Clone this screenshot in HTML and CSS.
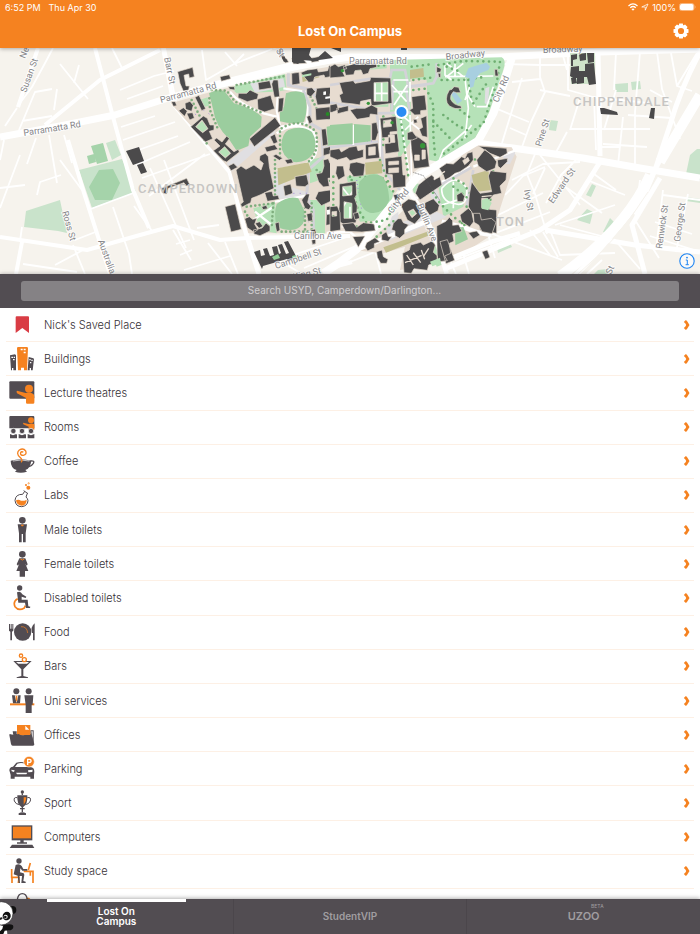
FILE: index.html
```html
<!DOCTYPE html>
<html lang="en">

<head>
    <meta charset="UTF-8">
    <meta name="viewport" content="width=device-width, initial-scale=1.0">
    <title>Lost On Campus</title>
    <link rel="stylesheet" href="styles.css">
</head>

<body>
    <svg class="defs" aria-hidden="true">
        <symbol id="chevron" viewBox="0 0 18 30">
            <path d="M1 6 6 1Q9 0 11 4L18 15 11 26Q9 30 6 29L1 24Q7 20 8 15 7 10 1 6z" fill="#f58220"/>
        </symbol>
    </svg>

    <header class="header">
        <div class="status">
            <span>6:52 PM</span>
            <span>Thu Apr 30</span>
            <span class="status-right">
                <svg width="10" height="8" viewBox="0 0 20 16" fill="none" stroke="#fff" stroke-width="2.6"><path d="M1 6Q10-2.500 19 6M4.500 9.500Q10 4.500 15.500 9.500"/><path d="M10 15.500 6.800 12.200Q10 9.600 13.200 12.200z" fill="#fff" stroke="none"/></svg>
                <svg width="8" height="8" viewBox="0 0 16 16" fill="none" stroke="#fff" stroke-width="1.500"><path d="M1.500 8 14 2 8.500 14.500V8z"/></svg>
                <span>100%</span>
                <svg width="17" height="8" viewBox="0 0 34 16"><rect x="1" y="1" width="29" height="14" rx="4" fill="none" stroke="#fbc79b" stroke-width="1.500"/><rect x="2" y="2" width="27" height="12" rx="3" fill="#fff"/><path d="M32 5v6q2-3 0-6" fill="#fbc79b"/></svg>
            </span>
        </div>
        <div class="title-bar">
            <h1>Lost On Campus</h1>
            <button class="settings" aria-label="Settings">
                <svg width="16" height="16" viewBox="-8 -8 16 16"><g fill="#fff"><path d="M-1.800-7.500h3.600l.7 3h-5zM-1.800 7.500h3.600l.7-3h-5z"/><path d="M-1.800-7.500h3.600l.7 3h-5zM-1.800 7.500h3.600l.7-3h-5z" transform="rotate(45)"/><path d="M-1.800-7.500h3.600l.7 3h-5zM-1.800 7.500h3.600l.7-3h-5z" transform="rotate(90)"/><path d="M-1.800-7.500h3.600l.7 3h-5zM-1.800 7.500h3.600l.7-3h-5z" transform="rotate(135)"/></g><circle r="4.500" fill="none" stroke="#fff" stroke-width="2.800"/></svg>
            </button>
        </div>
    </header>

    <div class="map">
        <svg class="map-canvas" viewBox="0 48 700 226" preserveAspectRatio="xMidYMid slice" role="img" aria-label="Campus map">
            <rect y="48" width="700" height="226" fill="#f6f3ed"/>

            <!-- parks outside of campus -->
            <g fill="#c9e3cb">
                <path d="M79 170 122 159 136 192 92 208zM26 211 60 200 67 233 58 231 24 227zM106 143 115 140 121 155 112 160z"/>
                <path fill="#a5d3aa" d="M91 146 103 143 108 161 97 164zM87 156l7-2 2 8-7 2zM99 170l14-1 7 14-8 17-17 0-6-13z"/>
                <path d="M615 84l13-1v9l-12 0zM631 82l9-1 1 8-9 1zM550 120l8 1-2 10-7-1zM586 195l6-11 4 2-5 11zM577 220l10-11 6 3-3 12zM603 232l7-14 4 4-5 13zM690 155l7-6h3v31l-14-6zM686 197l14 2v4l-14-2zM497 248l13-5 2 4-14 6zM598 270l10-1v5h-14z"/>
            </g>

            <!-- side streets -->
            <g fill="none" stroke="#fff" stroke-width="1.800" stroke-linejoin="round">
                <path d="M60 64 88 99M53 48 44 65 32 87 17 107M74 83l5-18M112 48l10 20M165 48l11 54M120 90l34-14 20-5M127 99l36-13M202 50l4 30 28-16 10-10M225 52l12 14M234 64l38-15M19 130 35 92 52 89M22 121l30-5M57 89l-3 21M64 135l8 28M49 135l8 48M36 138l-9 26M0 188l25-3M37 195l3-13 21-7M4 140 0 160M17 108 5 126"/>
                <path d="M136 165l54-23M142 178l68-24M149 196 205 154M121 127l34-11M123 140l52-18M130 153l48-17M150 168l36 80M164 160l30 80M113 207l16 47 3 20M73 245l12 29M88 210 136 192M75 240 98 231M0 208l20-53M60 160l22 30M22 227l-2 14M173 230l18 30M176 244l14-4M180 255l12-5M208 243l24 31M184 270l46-14M197 228l22-3M225 242l13 32M23 264l54 8M55 265 83 250M152 231l-18-25M262 250l40 24M290 256l60-20M304 268l80-34"/>
                <path d="M503 64l37 1 40 0M512 82l28-3M540 57l0 20 5 15-14 30-9 25M522 78l-20 65M568 52l0 38 25 7 55 6M580 98l-10 32M540 90l30 6M570 129l34 0 46 0M562 52l5 18M616 52l-2 38M604 130l12-40M640 52l-5 60 0 53M623 117l-5 48M671 53l6 33 15 5M657 52l5 37 18 50M697 53l-20 33M650 90l22 12M600 147l20 0M594 98l2 52M567 132l-13 24M603 144l44 3M495 108l34 14M510 128l16 7M628 115l44 3"/>
                <path d="M512 180 543 164 580 162M505 195 523 176 545 167M535 154l-8 20 8 20 12 40M540 155l40 50M545 168l-12 26M576 160l-15 15-15 28M594 174l22 16M567 188l35 25M587 180l38 15M555 225l60-20M560 225l45 12M550 230l10 25 55-2M543 193l-45 22M550 212l-57 22M485 224l10 34M530 230l20 25M543 232l15 25M602 260l-15 14M640 180l-5 40 24 38M663 190l-7 60M688 194l-12 58M663 195l37 5M655 222l37 12M650 236l50 16M614 239l26 30M446 251l10 23M462 250l7 24M482 230l80 30M450 262l60-23M375 250l6 24M350 262l40-16"/>
            </g>

            <!-- main roads -->
            <g fill="none" stroke="#fff" stroke-width="4" stroke-linejoin="round">
                <path d="M45 125 100 80 160 50M95 48 113 117 133 190 149 228M38 48 18 107M68 140 84 193 110 274M0 237 87 250 140 235 173 226 220 240 247 238 350 236M22 242 16 274M163 48l10 54M330 268 352 262"/>
                <path stroke-width="5" d="M172 102 230 172 247 236 259 274M598 52l2 104M700 52Q680 90 670 125L655 170 636 215"/>
                <path stroke-width="5" d="M447 268 540 230 570 210 600 162M545 230 635 245 700 252"/>
                <path stroke-width="7" d="M0 137 60 126 115 115 165 99 215 85 290 66 350 57 480 58 600 52 700 49"/>
                <path stroke-width="7" d="M477 143 583 158 640 168 700 178"/>
                <path stroke-width="10" d="M700 95 660 162M650 175Q625 230 560 276"/>
                <path stroke-width="5" d="M664 150Q640 210 575 276M660 178 632 225 645 274"/>
            </g>
            <g fill="none" stroke="#f6f3ed"><path d="M700 118 670 166M648 192Q618 240 578 274"/></g>

            <!-- campus, west side -->
            <g transform="translate(160 60) scale(.33333)">
                <path fill="#e7dcd0" d="M32 130 165 92 380 42 542 14v506H265L242 440 212 330z"/>
                <path fill="#b6e2b8" d="M210 82 375 42 380 90 350 95 230 100zM450 300 490 290 495 355 450 370zM280 445 345 425 350 520 300 510zM445 420h50v100h-30zM118 120l25-8 5 25-20 5z"/>
                <g fill="#e0dfe2"><path d="M200 310 325 210 350 205 340 225 215 335zM340 340 370 330 375 375 450 400 440 412 345 418zM270 70l100-15 5 25-90 18z"/></g>
                <g fill="none" stroke="#fff" stroke-width="7"><path d="M210 95Q240 135 310 160L350 170M355 90 350 150 360 200 440 190 445 130 435 95 370 85M350 220Q400 180 460 215Q490 290 430 315L350 330M345 425l105-20M285 455l50 40M280 480l60-40"/></g>
                <g fill="none" stroke="#d3d2d8" stroke-width="9"><path d="M385 40v35l75 15 80 0M430 90l20 50v50l35 20 5 80-45 40-5 80 20 40v105M490 265l50-10M460 100l20 30 60 0"/></g>
                <path fill="none" stroke="#fff" stroke-width="18" d="M160 80 395 24 540-4"/>
                <g fill="#9bcd9e">
                    <path d="M147 100Q175 85 195 95L222 130Q280 145 305 170L303 200 270 230 265 258 230 272 205 235Q165 195 160 150z"/>
                    <path d="M378 100Q410 88 432 100Q448 140 432 185Q400 195 360 184V152L372 140z"/>
                    <path d="M385 210Q425 195 455 215Q475 245 460 280Q440 310 400 306Q365 290 364 255Q366 220 385 210z"/>
                    <path d="M350 432Q385 405 415 415L432 450Q438 490 420 500Q395 520 350 500Q340 460 350 432z"/>
                    <path d="M500 200l40-8v60l-38 5z"/>
                </g>
                <path fill="#c2be8d" d="M352 325 445 307 455 335 355 376zM425 42l50-10 3 20-50 14z"/>
                <g fill="none" stroke="#7fae7e" stroke-width="8" stroke-linecap="round" stroke-dasharray="0 13">
                    <path d="M155 90 200 92 225 125 310 160M148 115 150 150 175 210M365 205Q420 170 468 215Q480 280 440 310M360 215v80M345 300v110M95 120l30 60M140 250l-20-30M255 455l30 50M365 515h80M435 430v80M340 430 335 500M230 75 375 48M452 110l30 60 40 10M470 330l50 40v120M455 430v80M260 440l80-10"/>
                </g>
                <g fill="none" stroke="#a087d8" stroke-width="3" stroke-dasharray="3 16"><path d="M90 150l50 40M130 150l30 20M400 400h50M500 350l20 70M430 470l20 20"/></g>
                <g class="building outlined">
                    <path d="M53 35 98 22 103 50 88 54 86 42 72 46 78 78 88 78 86 90 70 93 60 70zM180 50 208 44 212 56 184 64zM370 0l10-4 6 10-10 3zM395-5 425-8 440 10 400 12zM450-5l25-5 2 14-22 3z"/>
                    <path d="M34 125l12 0 4 12-10 2zM56 152l14-9 12 10-8 16zM75 130l15-6 10 12-5 18-18-6zM80 160l18-2 5 16-14 6zM105 112l12-6 20 40-12 6zM205 80l18 0 2 10-16-2z"/>
                    <path fill-rule="evenodd" d="M92 200 130 168 142 175 150 195 162 195 162 210 148 214 158 236 136 246zM107 200 128 218 144 206 126 180z"/>
                    <path fill-rule="evenodd" d="M160 272 180 258 162 240 170 234 186 246 200 228 208 236 196 252 222 275 235 268 238 276 200 306 190 302zM176 276 196 294 212 280 194 260z"/>
                    <path d="M268 237 345 172 362 197 283 260zM228 330 243 318 258 328 282 315 303 330 310 310 298 300 300 287 316 280 325 290 328 320 342 385 300 405 275 415 272 428 245 442 242 432 250 426zM195 440 226 432 244 508 213 516zM5 385 80 355 90 375 78 378 72 368 25 385 20 402 10 400zM205 318l16-8 12 12-20 10z"/>
                    <path d="M235 100l25 0 10-10 25 12-3 15-30 8-28-12zM294 68l35-6 6 22-38 6zM340 60l14 0 5 50-16 2-8-40zM292 118l40-12 12 40-30 10-20-8zM356 115l16-2-4 40-14 4zM330 230l15-8 8 25-12 5zM314 262l30-8 10 14-34 8zM338 288l10-5 20 12-10 6zM374 300l20-4 6 12-18 4zM405 350 440 344 446 372 435 380 408 378zM370 378 392 372 398 400 375 408zM314 398l22-4 4 14 14-2 4 12-36 6zM305 440l14-4 4 10-14 3z"/>
                    <path d="M395 40l22-3 3 34-24 4zM422 38l20-8 30-4 3 10 28-4 4-15 33-4v32l-45 8-3-8-28 6-4 14-14 2zM440 85l16-2 10 12-14 16-12-8zM470 85l50-4v20h-10v10h10v20l-48 4-6-25zM466 145l58-6v38l-56 4zM440 170l10-4 8 20-10 6zM484 208l14-2 6 48-16 4zM490 265l50-12v20l-50 14z"/>
                    <path d="M490 300l15-4 5 14 18-2-6 25 2 20-20 2 4 24-18 2-14-15-8-24 18-4 6-20zM475 395l35-5 10 15-6 18-30 14-18-22zM425 420l14-18 10 0-6 25 10 12-6 10-12-4zM500 440l38-6v56l-40 6zM452 510l14-3 4 20-14 4zM455 540l12-3 0 14-10 2zM440 462l16-4 2 24-14 2zM254 476l14-6 10 8 12-3-6 18 10 16-12 8-20-14zM280 510l26-6 12-15 12 10 0 14-30 14-18-5zM345 490l12-4 3 25-10 5zM285 490l14-5 10 14-12 6z"/>
                </g>
                <g fill="#b6e2b8"><path d="M426 45l28-5v6l-28 6zM178 276 194 262 210 280 196 292zM109 201 126 183 142 205 128 216z"/></g>
                <path fill="#fff" d="M490 95l8-1 0 10-8 1zM496 110l14-1v6l-14 2zM500 450l20-3v14l-19 3z"/>
                <circle cx="503" cy="162" r="6" fill="#268a26"/>
            </g>

            <!-- campus, east side and Victoria park -->
            <g transform="translate(330 60) scale(.33333)">
                <path fill="#e7dcd0" d="M0 14 180 0 290 20 300 300 240 345 100 520H0zM430 255 545 262 560 290 485 525 385 590 350 605 210 630 225 560 160 580 90 572z"/>
                <path fill="#b6e2b8" d="M180 0 515-8Q530 0 520 30L470 180 430 242 325 305 298 300 290 60 180 50zM10 20l160-15v20L10 38zM180 30h60l5 210-40 60-5-120-20-20zM50 350l90-10 50 60-20 80-80 5-25-60zM325 380 370 360 410 380 400 440 340 470zM130 60h45v80h-45zM30 370h45v110H30zM245 380l20-10 5 25-18 5zM300 560l60-10 0 55-40 15z"/>
                <path fill="#e0dfe2" d="M170 500 320 455 350 470 170 545zM300 400l20-15 15 50-20 10zM410 400l30-10v40l-25 10zM520 285l35-15 0 12-15 30-20 0zM185 470l20-15 0 30-30 20zM466 85l12-5-4 55-10-5z"/>
                <g fill="none" stroke="#fff" stroke-linejoin="round">
                    <path stroke-width="24" d="M545-5 520 75 490 160 445 242 335 308 262 350 235 385 190 430 135 500 80 568 25 610-20 640"/>
                    <path stroke-width="14" d="M238 395 275 450 300 500 325 560 350 640M335 485 400 502 445 518 485 525M90 565 300 480M350 600 485 545 570 520"/>
                    <path stroke-width="7" d="M420 320 300 385 260 415M430 320 560 270M105 560l-45-45-70 4"/>
                </g>
                <g fill="none" stroke="#d3d2d8" stroke-width="8"><path d="M0 75 130 55 180 55 185 30H225L235 80 310 70 320 50V10M0 128 100 145 140 160 240 158M140 160 155 260 160 330 210 390M0 262 145 245M228 80l10 70M190 60l-5 90M240 80l50-5M430 330l-20 110M270 410 425 322"/></g>
                <path fill="none" stroke="#fff" stroke-width="5" d="M345 50 490 48M350 10l50 40M350 50 400 10M375 5v45M405 55l10 90-10 90M410 100l25 40M440 140l30 0 20-60M405 120l25-70M410 210l-70 60-12 30M410 215l15-20M345 15v30l20 15M185 75l45 50M232 75l-40 60M190 60h45M190 95h45M240 65v60M210 160l30 200M240 165l5 190M220 170l50 40M265 170l-40 40M70 195v60M135 70v60M155 65v65M130 100h45M150 180v110M335 385q45-50 75 0q5 60-40 45q-35-5-35-45M335 435l80-25M370 365v80M35 380l40 50M80 375l-50 80M35 500h50M60 440v60"/>
                <g fill="none" stroke="#6faf72" stroke-width="8" stroke-linecap="round" stroke-dasharray="0 17">
                    <path d="M325 15 400 3 510 5 500 70 460 190 330 290M335 60l65 0 70-10M295 100l15 35 0 90 5 60M350 20l40 15M415 60l10 60M340 165l40 30 40 20M390 150l40 30M310 185l60 60M430 130l40-60M10 30 170 15M245 20l65-8M250 60l60-8M60 350l20-15M150 300l30 80M65 360l15 80 30 50 60-10 30-60M90 350l70 5 30 40M160 170v100M210 160l25 190M250 90l45-5M140 530l60-55M290 370l40 60 40 40 40 30M340 340l60 30 40 60M410 440l-20 70M370 380l50 40M420 290l70 40-10 100M10 350v150M80 500l70 0"/>
                </g>
                <path fill="none" stroke="#a087d8" stroke-width="3" stroke-dasharray="3 9" d="M75 245l60-3M10 470v50M80 360l15 90M30 375h40"/>
                <g fill="#a8cfe0"><path d="M405 50 415 25 435 18 470 8 480 20 475 30 450 40 435 60 430 80 420 84 418 55zM362 100l12-6 22 28-14 10z"/></g>
                <path fill="#c2be8d" d="M240 30l40-6 2 26-42 6zM105 308l50-6 2 38-50 4zM425 345l50-15 10 60-50 6zM160 562 300 512 302 524 168 578z"/>
                <g fill="#9bcd9e"><path d="M0 195 68 190v62L0 256zM72 192l50 4v48l-50 6zM88 365Q120 330 158 350Q175 370 178 420Q160 465 120 458Q90 450 85 400zM375 508l25-8 14 38-38 18z"/></g>
                <g class="building outlined">
                    <path d="M0 20l15-8 10 8 20-6 5 12-15 4 10 20-45 4zM40 20l45-12 25 2 30 0v12l-20 4-5 14-16 4-6-14-18 2-4 12-24 2z"/>
                    <path fill-rule="evenodd" d="M28 68 70 62 75 70 120 62 122 52 182 54 186 130 124 138 122 118 92 124 90 135 72 132 35 128 28 105 38 100zM132 68v56h42V66z"/>
                    <path d="M0 135l20-4 6 18-20 8-6 0zM20 145l35-8 0 16-32 8zM60 150l20-5 25 0 20-10 18 10v20l-22-3-2 10-38 6zM125 190l15-3 5 30-8 24-12 0zM245 110 285 105 290 150 272 152 272 164 254 165 238 150 248 145z"/>
                    <path fill-rule="evenodd" d="M150 175l48-6 4 45-22 2 0 8 22-3 6 54-42 6-2-30 18-2-2-18-24 3zM160 182v20l25-3-2-20zM175 225v24l20-2-2-22z"/>
                    <path fill-rule="evenodd" d="M165 295l50-6 4 56 8 0 0 35-38 4-2-40-20-2zM176 305v10l30-2v-10zM176 325v14l30-2v-14z"/>
                    <path fill-rule="evenodd" d="M240 215l30 20 20 15 8 70-46 6-8-60zM254 285v16h14v-16zM276 270v28l10-2v-26z"/>
                    <path d="M272 175l18-8 2 65-16-4-8-20 10-6zM232 218l15-4 15 20-15 6-15 0zM250 178l10 0 2 10-10 2z"/>
                    <path fill-rule="evenodd" d="M106 255l38-6 5 45-42 4zM116 262v24l20-2v-24z"/>
                    <path d="M0 270 28 266 34 276 58 262 80 258 84 272 100 268 100 292 60 302 50 292 22 300 0 290zM60 310l20-4 25 6-4 35-30 3-14-20zM20 318l20 0 5 30-20 12-8-20z"/>
                    <path fill-rule="evenodd" d="M28 372l50-8 2 40-6 10 8 24-4 50-38 4-16-10 4-50zM38 380v28l28-3v-28zM42 425l0 50h24v-45z"/>
                    <path fill-rule="evenodd" d="M0 440l22-2 8 20 2 52-32 5zM6 455v14l14-1v-14z"/>
                    <path d="M70 460l15-3 4 18-14 4zM35 492l35-4 10 14 20-14 32 4 4 20-40 4-50-2zM68 530 105 528 85 562zM190 405l18-4 2 18-14 3z"/>
                    <path d="M358 90Q340 120 358 138Q375 150 395 145L393 138Q370 135 362 118Q360 105 370 95L380 98 392 98 386 82 372 80 366 88zM320 20l14 6-2 10-12 2zM324 40h8v12l-6 0zM494 28l8 0 3 20-10 0z"/>
                    <path d="M445 258 530 265 532 280 510 292 480 280zM440 300 465 268 485 285 500 305 495 325 470 335 445 318zM502 300l30-5 0 10-20 20-8-6z"/>
                    <path fill-rule="evenodd" d="M328 325 350 310 370 312 395 290 405 295 412 280 428 275 430 300 415 318 390 335 375 340 360 352 345 360 340 345zM398 302l6 12 14-12-4-10z"/>
                    <path d="M265 375 290 355 305 345 312 352 312 360 330 350 336 375 270 420 256 400zM380 405l14-8 10 12-4 16-18 0zM285 428l25-12 18 20-4 16-25 14-16-24z"/>
                    <path fill-rule="evenodd" d="M212 435l24-18 20 5 24 40-26 30-22-12zM234 455l12 18 14-12-10-14z"/>
                    <path d="M190 490l14-14 10 0 6 12 16 6-12 15 0 12-15 14-14-8 0-14-10-4zM155 525l14-10 6 15 10 0-10 14-20-4zM110 548l25-15 14 12-16 6 0 12-20 10-8-12zM140 575l16-5 4 20 14 8-4 12-18 0-10-18z"/>
                    <path fill-rule="evenodd" d="M425 365 450 400 485 395 475 348 482 332 500 335 530 338 528 360 510 378 515 400 490 405 475 422 478 448 500 450 500 520 450 510 448 495 415 440 418 405zM455 415v28l15 0 0-28z"/>
                    <path d="M390 465l25-20 10 10 6 30-12 16-24-16zM415 518l25-5 10 12-20 12zM430 460l20 0 4 20 30-5 14 12-12 34-30-6-10-20-14-8zM320 498l28-14 10-12 10 10 0 14 18-2 10 20-28 8 4 22-14 6 4 30-18 8 8 14-30 4zM330 545l22-6 22 62-26 10zM218 580l20-10 4-15 30-8 8 8 26-12 10 12-6 22 12 10 0 18-26 10-4 16-40-5-8 14-22-2zM456 575l16-5 8 22-14 6z"/>
                </g>
                <g fill="none" stroke="#e7dcd0" stroke-width="4"><path d="M230 585l20 30M250 578l22 30M274 570l10 28M296 565l-16 25M225 608l50-22M335 340l10-6M455 410l30-3"/></g>
                <g fill="#b6e2b8"><path d="M238 456l8 12 10-8-8-10zM455 420l18-6 12 15-10 22-20-5zM300 605l30-12 3 16-26 10z"/></g>
                <g fill="#37953a"><circle cx="278" cy="257" r="8"/><circle cx="186" cy="188" r="5"/><circle cx="37" cy="32" r="5"/><circle cx="115" cy="130" r="5"/></g>
                <path fill="none" stroke="#555" stroke-width="2" stroke-dasharray="3 2" d="M250 337l30 10 50 75"/>
            </g>

            <!-- buildings out in the streets -->
            <g class="building">
                <path d="M126 151 139 147 144 161 133 165zM137 165l6-2 4 9-6 2zM278 51l3-1 6 11-3 1zM292 48l19 0-2 7 5 6-12-1-4 4-6-2zM315 60l10-9 8 7-14 2zM331 48h10l0 4zM401 48h6v2h-6zM600 108l4 0 13 4 1 3-17-1zM651 108l4 0-1 11-5-1z"/>
                <path fill="#cfe3c9" d="M570 53h25v31h-24z"/>
                <path d="M571 55l6-1 0 5-4 1 0 6-2 0zM579 54l7-1 0 7-6 1zM587 53l7 0 0 9-6 1zM571 67l8-1 0 5 6 0 0-7 9-1 2 21-7 1-2-8-3 0 0 6-7 1 0-6-4 0-3-2zM571 78l5 0 1 5-5 1z"/>
                <path d="M254 252l6-2 1 6 4-1-2-6 4-1 3 8 4-1-2-8 5-1 2 8 2-1-3-8 4-1 4 10 3-1-5-11 4-1 9 17-9 3-1-2-24 7-1 3z"/>
            </g>
            <path fill="#90cc95" d="M272 257l6-3 2 4-6 2zM292 256l4-1 1 3-4 1z"/>

            <g class="district">
                <text x="138" y="193">CAMPERDOWN</text>
                <text x="573" y="106">CHIPPENDALE</text>
                <text x="496" y="226">TON</text>
            </g>
            <g class="street">
                <text transform="translate(24 136) rotate(-9)">Parramatta Rd</text>
                <text transform="translate(161 103) rotate(-15)">Parramatta Rd</text>
                <text transform="translate(349 64)">Parramatta Rd</text>
                <text transform="translate(446 60) rotate(-6)">Broadway</text>
                <text transform="translate(543 53) rotate(-2)">Broadway</text>
                <text transform="translate(26 93) rotate(-70)">Susan St</text>
                <text transform="translate(25 59) rotate(-68)">New St</text>
                <text transform="translate(164 58) rotate(78)">Barr St</text>
                <text transform="translate(264 32) rotate(58)">Ross St</text>
                <text transform="translate(498 103) rotate(-66)">City Rd</text>
                <text transform="translate(541 147) rotate(-72)">Pine St</text>
                <text transform="translate(553 204) rotate(-56)">Edward St</text>
                <text transform="translate(524 190) rotate(80)">Ivy St</text>
                <text transform="translate(662 249) rotate(-82)">Renwick St</text>
                <text transform="translate(680 242) rotate(-82)">George St</text>
                <text transform="translate(62 212) rotate(74)">Ross St</text>
                <text transform="translate(98 241) rotate(70)">Australia St</text>
                <text transform="translate(294 239)">Carillon Ave</text>
                <text transform="translate(276 269) rotate(-18)">Campbell St</text>
                <text transform="translate(294 280) rotate(-14)">King St</text>
                <text transform="translate(392 214) rotate(-52)">City Rd</text>
                <text transform="translate(417 205) rotate(68)">Butlin Ave</text>
                <text transform="translate(611 275) rotate(-66)">St</text>
            </g>
            <circle cx="401.500" cy="112" r="6" fill="#2a8cf4" stroke="#fff" stroke-width="2"/>
        </svg>
        <button class="info" aria-label="Map information">
            <svg width="16" height="16" viewBox="0 0 16 16"><circle cx="8" cy="8" r="7.200" fill="#fff" fill-opacity=".6" stroke="#1d84f3" stroke-width="1.100"/><path d="M6.800 7H8.300V11.500M6.600 11.700h3.200" stroke="#1d84f3" fill="none"/><circle cx="8" cy="4.600" r=".9" fill="#1d84f3"/></svg>
        </button>
    </div>

    <form class="search">
        <input type="search" aria-label="Search" placeholder="Search USYD, Camperdown/Darlington...">
    </form>

    <ul class="places">
        <li><a href="#"><svg class="icon" viewBox="0 0 78 78"><path d="M20 16q0-3 3-3h34q3 0 3 3v47L40 48 20 63z" fill="#d93c44"/></svg><span>Nick's Saved Place</span><svg class="chevron"><use href="#chevron"/></svg></a></li>
        <li><a href="#"><svg class="icon" viewBox="0 0 78 78"><path class="dark" d="M3 28 18 25 21 28V73H13V66H9V73H6zM59 33l14 4 2 2-4 34H66V66H62V73H56z"/><path class="orange" d="M24 6Q24 3 28 3H53Q57 3 57 7L54 73H45V65H36V73H27z"/><path fill="#fff" d="M35 8h6v5h-6zM44 8h6v5h-6zM44 17h6v5h-6zM7 32h5v4H7zM14 32h4v4h-4zM12 39h5v4h-5zM61 39h4v4h-4zM67 41h4v4h-4zM63 48h4v4h-4z"/></svg><span>Buildings</span><svg class="chevron"><use href="#chevron"/></svg></a></li>
        <li><a href="#"><svg class="icon" viewBox="0 0 78 78"><rect class="dark" x="1" y="4" width="75" height="52" rx="3"/><path class="orange" d="M24 32 50 39Q65 35 74 43 77 48 76 68Q76 71 72 71H54Q50 71 51 66V54L24 40Q21 34 24 32z"/><circle class="orange" cx="60" cy="26" r="12"/></svg><span>Lecture theatres</span><svg class="chevron"><use href="#chevron"/></svg></a></li>
        <li><a href="#"><svg class="icon" viewBox="0 0 78 78"><path class="dark" d="M4 6H73Q76 6 76 9V43H1V9Q1 6 4 6z"/><path class="orange" d="M42 26 58 30Q71 26 76 31V47H59V38L43 31z"/><circle class="orange" cx="66" cy="19" r="9"/><g class="dark"><circle cx="13" cy="51" r="8" stroke="#fff" stroke-width="2"/><circle cx="39" cy="51" r="8" stroke="#fff" stroke-width="2"/><circle cx="66" cy="51" r="8" stroke="#fff" stroke-width="2"/><path d="M3 60l9 4 10-4 2 3v10H3zM29 60l10 4 10-4 2 3v10H29zM56 60l10 4 10-4v13H56z"/></g></svg><span>Rooms</span><svg class="chevron"><use href="#chevron"/></svg></a></li>
        <li><a href="#"><svg class="icon" viewBox="0 0 78 78"><path class="dark" d="M5 38Q5 61 23 66L18 71Q35 77 54 71L49 66Q64 61 67 38Q36 29 5 38z"/><path d="M12 39Q36 33 61 39" fill="none" stroke="#fff" stroke-width="2"/><path fill="none" stroke="#524c52" stroke-width="4" d="M64 39Q78 37 73 46 68 54 60 56"/><path fill="none" stroke="#f58220" stroke-width="4" d="M36 43Q43 37 33 28Q20 16 31 6Q43-1 50 9Q54 20 43 22Q33 22 35 14 38 9 43 13"/></svg><span>Coffee</span><svg class="chevron"><use href="#chevron"/></svg></a></li>
        <li><a href="#"><svg class="icon" viewBox="0 0 78 78"><path fill="none" stroke="#524c52" stroke-width="3" d="M44 26 57 35M47 28 41 37Q20 36 18 55Q20 74 38 74Q56 72 57 56 56 49 51 45L55 34"/><path class="orange" d="M21 55Q28 51 36 56 44 58 53 53Q53 70 38 71Q22 70 21 55z"/><circle class="orange" cx="58" cy="17" r="6"/><circle class="orange" cx="51" cy="9" r="3"/><circle cx="59" cy="4" r="2" fill="none" stroke="#f58220" stroke-width="2"/></svg><span>Labs</span><svg class="chevron"><use href="#chevron"/></svg></a></li>
        <li><a href="#"><svg class="icon" viewBox="0 0 78 78"><g class="dark"><circle cx="40" cy="10" r="10"/><path d="M26 22H54L50 49V76H42V51H38V76H30V49z"/></g><path class="orange" d="M35 23h10l-3 5h-4z"/></svg><span>Male toilets</span><svg class="chevron"><use href="#chevron"/></svg></a></li>
        <li><a href="#"><svg class="icon" viewBox="0 0 78 78"><g class="dark"><circle cx="40" cy="10" r="10"/><path d="M31 22H49L56 40 53 44 49 38 58 60H48V77H32V60H22L31 38 27 44 23 40z"/></g><path fill="none" stroke="#f58220" stroke-width="3" d="M34 24q6 6 12 0"/></svg><span>Female toilets</span><svg class="chevron"><use href="#chevron"/></svg></a></li>
        <li><a href="#"><svg class="icon" viewBox="0 0 78 78"><path fill="none" stroke="#f58220" stroke-width="5" d="M26 41Q11 49 18 65 29 79 46 69L49 62"/><g class="dark"><circle cx="32" cy="9" r="8"/><path d="M24 22Q35 16 40 28L52 35 50 39 38 35V44H56L58 64 64 65 63 69H51L48 53H28z"/></g></svg><span>Disabled toilets</span><svg class="chevron"><use href="#chevron"/></svg></a></li>
        <li><a href="#"><svg class="icon" viewBox="0 0 78 78"><circle class="dark" cx="41" cy="39" r="26"/><path fill="none" stroke="#f58220" stroke-width="2" d="M36 23Q54 22 56 42"/><g class="dark"><path d="M0 15h3v14h2V15h3v14h2V15h3v20L9 38v26H4V38L0 35zM77 13Q64 24 69 42h3v22h5z"/></g></svg><span>Food</span><svg class="chevron"><use href="#chevron"/></svg></a></li>
        <li><a href="#"><svg class="icon" viewBox="0 0 78 78"><path class="dark" d="M13 24H68L43 49V69L57 73V75H23V73L37 69V49z"/><path fill="#fff" d="M21 27H60L54 32H28z"/><g fill="#fff" stroke="#f58220" stroke-width="4"><circle cx="36" cy="8" r="5"/><circle cx="46" cy="20" r="6"/></g></svg><span>Bars</span><svg class="chevron"><use href="#chevron"/></svg></a></li>
        <li><a href="#"><svg class="icon" viewBox="0 0 78 78"><path class="orange" d="M3 46H76V52H3z"/><g class="dark"><circle cx="22" cy="10" r="9"/><circle cx="59" cy="10" r="9"/><path d="M9 22H35L33 46H12zM46 22H73L71 50H68V75H50V50z"/></g><path fill="#fff" d="M17 22H28L23 45z"/><path class="orange" d="M20 23h5v13l-3 5-2-5z"/></svg><span>Uni services</span><svg class="chevron"><use href="#chevron"/></svg></a></li>
        <li><a href="#"><svg class="icon" viewBox="0 0 78 78"><path class="dark" d="M11 28H23V36H64V25H74V68H65V39H13z"/><path fill="#fff" d="M67 28h4v26z"/><path class="orange" d="M24 9H64V41H24z"/><path fill="#fff" d="M49 11V23H61z"/><path class="dark" d="M2 36Q14 40 29 36Q35 41 47 39H64Q68 39 69 43L76 67Q76 71 72 71H11Q7 71 6 66L1 39z"/></svg><span>Offices</span><svg class="chevron"><use href="#chevron"/></svg></a></li>
        <li><a href="#"><svg class="icon" viewBox="0 0 78 78"><path class="dark" d="M1 43Q2 32 12 32L22 20Q39 15 52 22L64 33Q76 34 76 47L75 58V68H64V62H17V68H5V57z"/><path fill="#fff" d="M25 23Q38 19 49 24L57 33H18zM7 41l10 2-2 5-7-2zM57 43l14-2-1 7-12 1zM21 50h34l-3 5H24z"/><circle class="orange" cx="60" cy="17" r="16" stroke="#fff" stroke-width="2"/><path fill="none" stroke="#fff" stroke-width="4" d="M56 27V10H61Q67 11 66 16 65 20 56 20"/></svg><span>Parking</span><svg class="chevron"><use href="#chevron"/></svg></a></li>
        <li><a href="#"><svg class="icon" viewBox="0 0 78 78"><g class="dark"><circle cx="40" cy="6" r="5"/><path d="M38 10h4v5h-4zM25 16H55Q57 43 42 52V66H38V52Q23 43 25 16zM29 70Q40 64 51 70V75H29zM33 54H47V58H33z"/></g><path class="orange" d="M44 22H52Q52 36 44 44z"/><path fill="none" stroke="#524c52" stroke-width="3" d="M25 23Q13 20 16 33 20 43 31 44M55 23Q67 20 64 33 60 43 49 44"/></svg><span>Sport</span><svg class="chevron"><use href="#chevron"/></svg></a></li>
        <li><a href="#"><svg class="icon" viewBox="0 0 78 78"><path class="dark" d="M8 4H70V49H8z"/><path class="orange" d="M12 8H66V43H12z"/><path class="dark" d="M34 48H44V55H54V59H24V55H34zM9 62H70L76 72H2z"/></svg><span>Computers</span><svg class="chevron"><use href="#chevron"/></svg></a></li>
        <li><a href="#"><svg class="icon" viewBox="0 0 78 78"><path fill="none" stroke="#f58220" stroke-width="5" d="M8 33V58H30L28 75M9 58V75M44 40H72V75M58 36 64 15M64 43V53"/><g class="dark"><circle cx="30" cy="9" r="8"/><path d="M20 21Q31 15 38 24L43 33H55V38H40L34 31 33 43 44 46 46 50 43 69 50 71V75H37L39 54H31L33 75H29L26 53 14 49z"/></g></svg><span>Study space</span><svg class="chevron"><use href="#chevron"/></svg></a></li>
        <li><a href="#" aria-label="Shops"><svg class="icon" viewBox="0 0 78 78"><path class="dark" d="M13 18H67V72H13z"/><path class="orange" d="M52 14H60L66 20V72H52z"/><path fill="none" stroke="#524c52" stroke-width="4" d="M25 20Q27 2 40 2T55 20"/></svg></a></li>
    </ul>

    <nav class="tabs">
        <svg class="panda" width="18" height="34" viewBox="0 0 54 102" aria-hidden="true"><circle cx="37" cy="30" r="12" fill="#111"/><ellipse cx="4" cy="40" rx="35" ry="35" fill="#fff" stroke="#222" stroke-width="2"/><ellipse cx="20" cy="48" rx="12" ry="13" transform="rotate(25 20 48)" fill="#111"/><circle cx="17" cy="50" r="6" fill="#fff"/><circle cx="16" cy="51" r="4" fill="#111"/><path d="M0 53q7-3 8 2-3 5-8 5z" fill="#222"/><path d="M0 76Q22 80 22 102H0z" fill="#fff"/><path d="M10 76Q30 70 39 76 43 86 32 91 22 90 14 92L10 102H0V94Q9 88 10 76z" fill="#111"/></svg>
        <a class="tab active" href="#"><span>Lost On<br>Campus</span></a>
        <a class="tab" href="#"><span>StudentVIP</span></a>
        <a class="tab" href="#"><span class="uzoo">UZOO<sup>BETA</sup></span></a>
    </nav>
</body>

</html>
```

FILE: styles.css
```css
* {
    box-sizing: border-box;
}

body {
    margin: 0;
    height: 100vh;
    display: flex;
    flex-direction: column;
    overflow: hidden;
    background: #fff;
    color: #353035;
    font-family: Inter, "Liberation Sans", sans-serif;
    font-size: 11px;
    font-weight: 300;
}

a {
    color: inherit;
    text-decoration: none;
}

button {
    display: flex;
    padding: 0;
    border: none;
    background: none;
    cursor: pointer;
}

.defs {
    position: absolute;
    width: 0;
    height: 0;
}

/* Header */
.header {
    flex: none;
    position: relative;
    z-index: 2;
    background: #f58220;
    color: #fff;
    box-shadow: 0 1px 4px rgba(0, 0, 0, 0.3);
}

.status {
    display: flex;
    gap: 8px;
    height: 14px;
    padding: 0 4px 0 5px;
    align-items: center;
    font-size: 9px;
    font-weight: 400;
}

.status-right {
    display: flex;
    gap: 3px;
    align-items: center;
    margin-left: auto;
}

.title-bar {
    display: grid;
    grid-template-columns: 1fr auto 1fr;
    align-items: center;
    height: 34px;
    padding: 0 11px;
}

.title-bar h1 {
    grid-column: 2;
    margin: 0;
    font-size: 13px;
    font-weight: 700;
}

.settings {
    justify-self: end;
}

/* Map */
.map {
    flex: none;
    position: relative;
}

.map-canvas {
    display: block;
    width: 100%;
    height: 226px;
}

.building {
    fill: #4b4a4b;
}

.outlined {
    stroke: #e7dcd0;
    stroke-width: 2px;
}

.district {
    font-family: Roboto, sans-serif;
    font-size: 13px;
    font-weight: 500;
    letter-spacing: 1px;
    fill: #c6c5c3;
}

.street {
    font-family: Roboto, sans-serif;
    font-size: 9px;
    font-weight: 400;
    fill: #858588;
    stroke: #fff;
    stroke-width: 2px;
    stroke-opacity: 0.7;
    paint-order: stroke;
}

.info {
    position: absolute;
    right: 5px;
    bottom: 5px;
}

/* Search */
.search {
    flex: none;
    position: relative;
    display: flex;
    height: 34px;
    padding: 7px 21px;
    background: #524d52;
    box-shadow: 0 0 4px rgba(0, 0, 0, 0.3);
}

.search input {
    flex: 1;
    min-width: 0;
    padding: 0 8px 2px;
    border: none;
    border-radius: 3px;
    background: #858285;
    color: #fff;
    font-family: inherit;
    font-size: 10px;
    text-align: center;
}

.search input::placeholder {
    color: #cfcdcf;
    opacity: 1;
}

/* Places list, the last row peeks out above the tabs */
.places {
    flex: 1;
    min-height: 0;
    display: grid;
    grid-template-rows: repeat(17, minmax(34px, 1fr)) 10px;
    margin: 0;
    padding: 0 6px;
    list-style: none;
    overflow: hidden;
    position: relative;
    background: #fff;
}

.places li {
    overflow: hidden;
    border-bottom: 1px solid #fdf0e5;
}

.places li:last-child {
    border-bottom: none;
}

.places a {
    display: flex;
    align-items: center;
    gap: 9px;
    height: 100%;
    min-height: 33px;
    padding: 0 4px 0 3px;
}

.icon {
    flex: none;
    width: 26px;
    height: 26px;
}

.dark {
    fill: #524c52;
}

.orange {
    fill: #f58220;
}

.chevron {
    width: 7px;
    height: 10px;
    margin-left: auto;
}

/* Tabs */
.tabs {
    flex: none;
    position: relative;
    display: flex;
    height: 35px;
    background: #524d52;
    box-shadow: 0 -1px 4px rgba(0, 0, 0, 0.3);
}

.tab {
    flex: 1;
    display: flex;
    align-items: center;
    justify-content: center;
    position: relative;
    padding-bottom: 2px;
    color: #a09da0;
    font-size: 10px;
    font-weight: 600;
    line-height: 10px;
    text-align: center;
}

.tab + .tab {
    border-left: 1px solid #4b464b;
}

.tab.active {
    color: #fff;
}

.tab.active::before {
    content: "";
    position: absolute;
    top: 0;
    left: 20%;
    width: 60%;
    height: 3px;
    background: #fff;
}

.uzoo {
    position: relative;
    font-size: 11px;
}

.uzoo sup {
    position: absolute;
    right: -4px;
    top: -7px;
    font-size: 5px;
    font-weight: 400;
    line-height: 5px;
}

.panda {
    position: absolute;
    left: 0;
    bottom: 0;
    z-index: 1;
}
```
